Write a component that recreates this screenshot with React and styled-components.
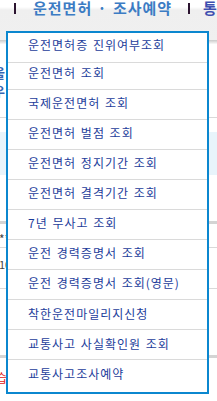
import React from "react";
import styled, { createGlobalStyle } from "styled-components";

const Global = createGlobalStyle`
  html, body { margin: 0; padding: 0; background: #fff; }
  body { width: 217px; height: 401px; overflow: hidden; font-family: "Noto Sans CJK KR", "Noto Sans", sans-serif; }
`;

const Page = styled.div`
  position: relative;
  width: 217px;
  height: 401px;
  overflow: hidden;
  background: #fff;
`;

const Header = styled.div`
  height: 40px;
  background: linear-gradient(to bottom, #ffffff 0px, #ffffff 7px, #efefef 10px, #f0f0f0 40px);
  display: flex;
  align-items: flex-start;
  white-space: nowrap;
`;

const NavBar = styled.span`
  display: block;
  flex: none;
  width: 2px;
  height: 11px;
  margin-top: 3px;
  margin-left: ${(p) => p.$ml}px;
  background: #2b1430;
`;

const NavLink = styled.span`
  display: block;
  flex: none;
  margin-left: ${(p) => p.$ml}px;
  font-size: 15px;
  line-height: 16px;
  font-weight: 700;
  letter-spacing: 1px;
  word-spacing: 1px;
  color: ${(p) => p.$color || "#3c7cc4"};
`;

const HeaderShadow = styled.div`
  height: 4px;
  background: linear-gradient(to bottom, #c9c9c9, #fafafa);
`;

const Section = styled.div`
  box-sizing: border-box;
  height: ${(p) => p.$h}px;
  padding-top: ${(p) => p.$pt || 0}px;
  background: ${(p) => p.$bg || "transparent"};
  border-bottom: ${(p) => (p.$rule ? "1px solid #d9d9d9" : "none")};
`;

const SideGlyph = styled.div`
  margin-left: -7px;
  width: 14px;
  font-size: 13px;
  line-height: 18px;
  font-weight: 700;
  color: #3466b4;
`;

const GrayBar = styled.div`
  height: 3px;
  background: #d4d4d4;
`;

const CellText = styled.div`
  font-size: ${(p) => p.$fs || 12}px;
  line-height: 14px;
  color: ${(p) => p.$color || "#444"};
  white-space: nowrap;
  margin-left: ${(p) => p.$ml || 0}px;
`;

const Menu = styled.ul`
  position: absolute;
  top: 31px;
  left: 6px;
  width: 203px;
  box-sizing: border-box;
  margin: 0;
  padding: 0;
  list-style: none;
  background: #fff;
  border: 2px solid #0b87cf;
`;

const MenuItem = styled.li`
  box-sizing: border-box;
  height: ${(p) => p.$h}px;
  padding: ${(p) => p.$pt}px 0 0 20px;
  border-top: ${(p) => (p.$first ? "none" : "1px solid #dadada")};
  font-size: 12px;
  line-height: 12px;
  color: #1d3d9b;
  letter-spacing: 1px;
  word-spacing: 1px;
  white-space: nowrap;
  cursor: pointer;
`;

const items = [
  { label: "운전면허증 진위여부조회", h: 29, pt: 6 },
  { label: "운전면허 조회", h: 27, pt: 4 },
  { label: "국제운전면허 조회", h: 30, pt: 7 },
  { label: "운전면허 벌점 조회", h: 30, pt: 7 },
  { label: "운전면허 정지기간 조회", h: 30, pt: 7 },
  { label: "운전면허 결격기간 조회", h: 30, pt: 7 },
  { label: "7년 무사고 조회", h: 30, pt: 7 },
  { label: "운전 경력증명서 조회", h: 30, pt: 7 },
  { label: "운전 경력증명서 조회(영문)", h: 30, pt: 7 },
  { label: "착한운전마일리지신청", h: 30, pt: 8 },
  { label: "교통사고 사실확인원 조회", h: 30, pt: 8 },
  { label: "교통사고조사예약", h: 33, pt: 8 },
];

export default function App() {
  return (
    <Page>
      <Global />
      <Header>
        <NavBar $ml={14} />
        <NavLink $ml={17}>운전면허 · 조사예약</NavLink>
        <NavBar $ml={16} />
        <NavLink $ml={13} $color="#3f4fb0">통계</NavLink>
      </Header>
      <HeaderShadow />
      <Section $h={74} $pt={20} $rule>
        <SideGlyph>울<br />우</SideGlyph>
      </Section>
      <Section $h={14} />
      <Section $h={43} $bg="#e8f4fb" />
      <Section $h={46} />
      <GrayBar />
      <Section $h={24} $pt={8} $rule>
        <CellText $ml={-1}>**</CellText>
      </Section>
      <Section $h={41} $pt={9} $rule>
        <CellText $fs={11} $ml={-1}>10</CellText>
      </Section>
      <Section $h={66} $pt={40}>
        <CellText $color="#e02020" $ml={-5}>,</CellText>
      </Section>
      <GrayBar />
      <Section $h={40} $pt={13}>
        <CellText $color="#e02020" $ml={-4}>습</CellText>
      </Section>
      <Menu>
        {items.map((it, i) => (
          <MenuItem key={it.label} $h={it.h} $pt={it.pt} $first={i === 0}>
            {it.label}
          </MenuItem>
        ))}
      </Menu>
    </Page>
  );
}
